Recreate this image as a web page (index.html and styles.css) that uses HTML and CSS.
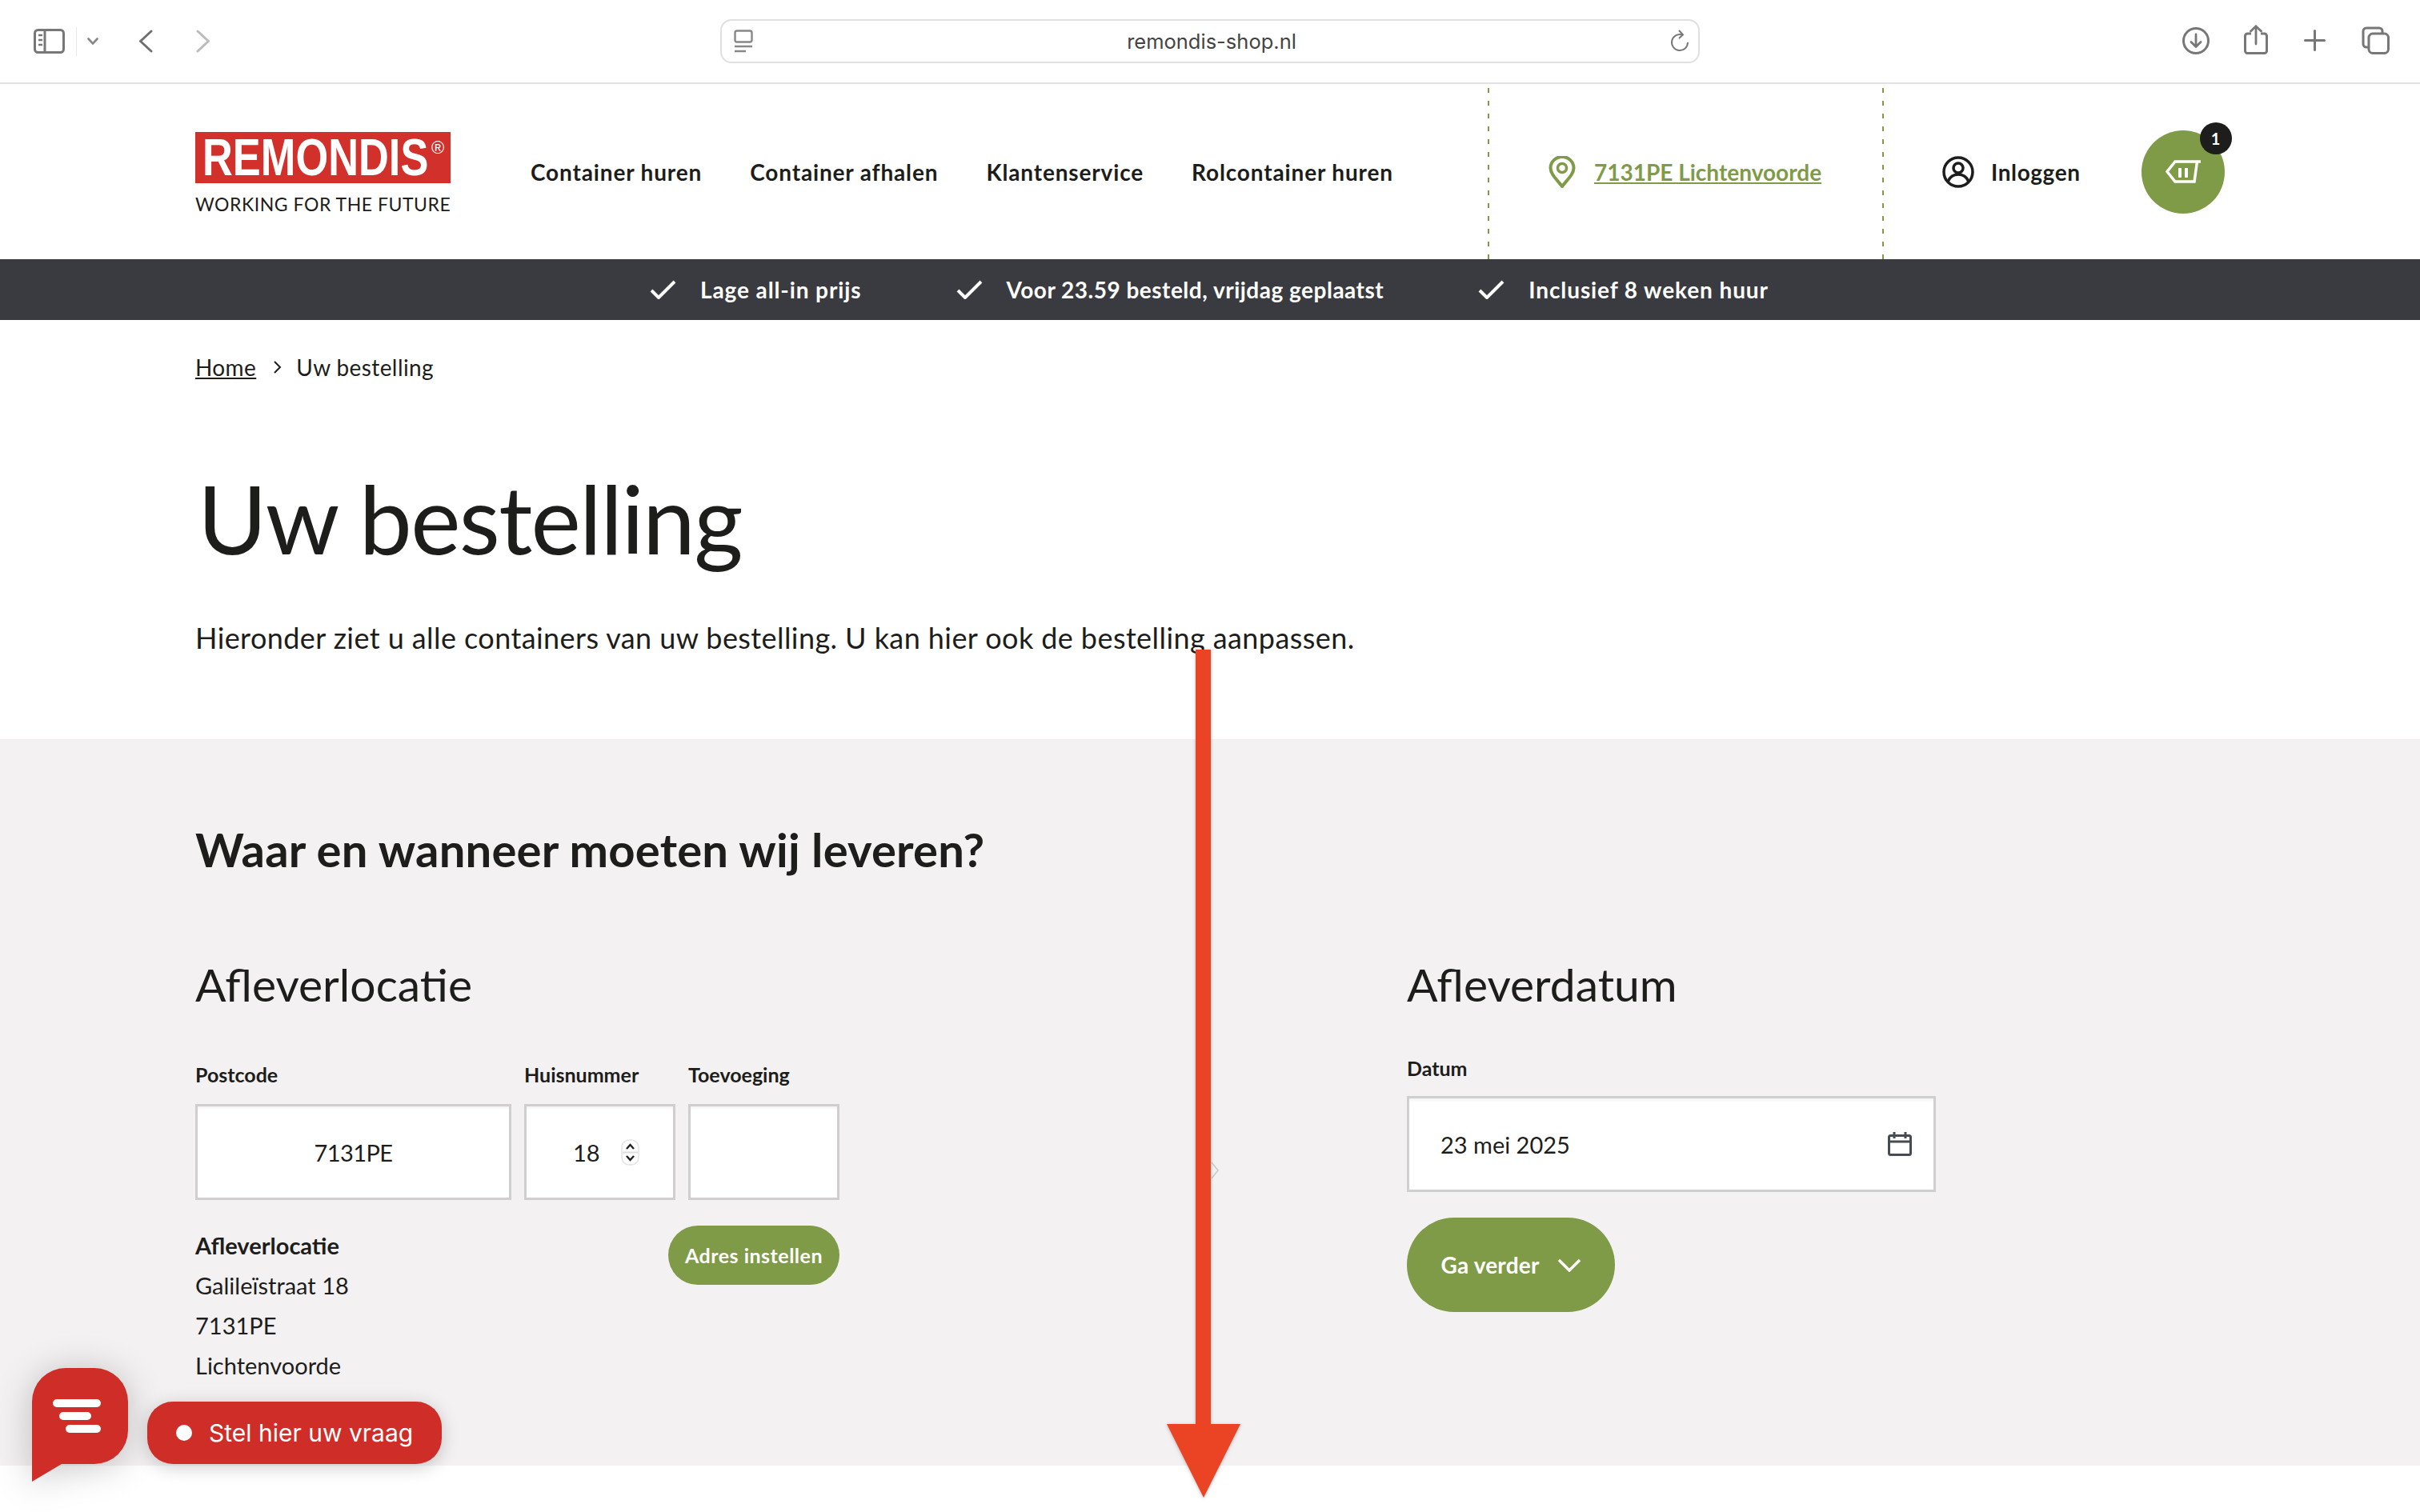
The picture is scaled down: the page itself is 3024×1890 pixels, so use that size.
FILE: index.html
```html
<!DOCTYPE html>
<html lang="nl">
<head>
<meta charset="utf-8">
<title>Uw bestelling</title>
<link rel="stylesheet" href="styles.css">
</head>
<body>
<div class="toolbar">
  <div class="tb-left">
    <svg class="i-sidebar" width="39" height="31" viewBox="0 0 39 31"><rect x="1.5" y="1.5" width="36" height="28" rx="4" fill="none" stroke="#777" stroke-width="3"/><path d="M14 2v27" stroke="#777" stroke-width="3"/><path d="M6 8h5M6 14h5M6 20h5" stroke="#777" stroke-width="2.4"/></svg>
    <span class="tb-sep"></span>
    <svg class="i-chev" width="14" height="9" viewBox="0 0 14 9"><path d="M1.5 1.5 7 7.5l5.5-6" fill="none" stroke="#888" stroke-width="2.6" stroke-linecap="round"/></svg>
    <svg class="i-back" width="18" height="29" viewBox="0 0 18 29"><path d="M16 2 2.5 14.5 16 27" fill="none" stroke="#707070" stroke-width="3" stroke-linecap="round" stroke-linejoin="round"/></svg>
    <svg class="i-fwd" width="18" height="29" viewBox="0 0 18 29"><path d="M2 2l13.5 12.5L2 27" fill="none" stroke="#bcbcbc" stroke-width="3" stroke-linecap="round" stroke-linejoin="round"/></svg>
  </div>
  <div class="urlbar">
    <svg class="i-site" width="24" height="30" viewBox="0 0 24 30"><rect x="1.5" y="1.5" width="21" height="14" rx="2.5" fill="none" stroke="#888" stroke-width="2.4"/><path d="M1 21h22M1 27h14" stroke="#888" stroke-width="2.4"/></svg>
    <span class="url-text">remondis-shop.nl</span>
    <svg class="i-reload" width="24" height="29" viewBox="0 0 24 29"><path d="M15 6.5A10 10 0 1 0 22 16" fill="none" stroke="#777" stroke-width="2"/><path d="M11 1l5 5.5-5 4.5" fill="none" stroke="#777" stroke-width="2"/></svg>
  </div>
  <div class="tb-right">
    <svg width="34" height="34" viewBox="0 0 34 34"><circle cx="17" cy="17" r="15.5" fill="none" stroke="#777" stroke-width="3"/><path d="M17 9v15M11 18.5l6 6 6-6" fill="none" stroke="#777" stroke-width="2.8" stroke-linecap="round" stroke-linejoin="round"/></svg>
    <svg class="i-share" width="30" height="37" viewBox="0 0 30 37"><path d="M9 11H4.500A3 3 0 0 0 1.500 14v18.500a3 3 0 0 0 3 3h21a3 3 0 0 0 3-3V14a3 3 0 0 0-3-3H21" fill="none" stroke="#777" stroke-width="3"/><path d="M15 24V2M8.500 8 15 1.800 21.500 8" fill="none" stroke="#777" stroke-width="2.800" stroke-linecap="round"/></svg>
    <svg class="i-plus" width="27" height="27" viewBox="0 0 27 27"><path d="M13.500 1.500v24M1.500 13.500h24" stroke="#777" stroke-width="3" stroke-linecap="round"/></svg>
    <svg class="i-tabs" width="35" height="35" viewBox="0 0 35 35"><path d="M8 26H6a4 4 0 0 1-4-4V6a4 4 0 0 1 4-4h16a4 4 0 0 1 4 4v2" fill="none" stroke="#777" stroke-width="3"/><rect x="9" y="9" width="24.500" height="24.500" rx="5" fill="none" stroke="#777" stroke-width="3"/></svg>
  </div>
</div>

<header class="site-header">
  <a class="logo">
    <span class="logo-box"><span class="logo-word">REMONDIS</span><span class="logo-reg">®</span></span>
    <span class="logo-tag">WORKING FOR THE FUTURE</span>
  </a>
  <nav class="main-nav">
    <a>Container huren</a>
    <a>Container afhalen</a>
    <a>Klantenservice</a>
    <a>Rolcontainer huren</a>
  </nav>
  <div class="location">
    <svg width="34" height="40" viewBox="0 0 34 40"><path d="M17 38C9 28 2.500 22 2.500 15a14.500 14 0 0 1 29 0c0 7-6.500 13-14.500 23z" fill="none" stroke="#7f9b47" stroke-width="4" stroke-linejoin="round"/><circle cx="17" cy="15" r="5.500" fill="none" stroke="#7f9b47" stroke-width="3.500"/></svg>
    <a class="loc-link">7131PE Lichtenvoorde</a>
  </div>
  <div class="account">
    <svg width="40" height="40" viewBox="0 0 40 40"><circle cx="20" cy="20" r="18" fill="none" stroke="#1d1d1b" stroke-width="3.500"/><circle cx="20" cy="15" r="6" fill="none" stroke="#1d1d1b" stroke-width="3.500"/><path d="M7 32c3-7 8-9 13-9s10 2 13 9" fill="none" stroke="#1d1d1b" stroke-width="3.500"/></svg>
    <span>Inloggen</span>
  </div>
  <div class="cart">
    <svg width="45" height="30" viewBox="0 0 45 30"><path d="M45 2H13L3 14.500 13 27h24l3.500-25" fill="none" stroke="#fff" stroke-width="3.500"/><path d="M19 10v12M27 10v12" stroke="#fff" stroke-width="4"/></svg>
    <span class="badge">1</span>
  </div>
</header>

<div class="usp-bar">
  <div class="usp usp-1"><svg width="33" height="24" viewBox="0 0 33 24"><path d="M2 13l9 9L31 2" fill="none" stroke="#fff" stroke-width="4"/></svg><span>Lage all-in prijs</span></div>
  <div class="usp usp-2"><svg width="33" height="24" viewBox="0 0 33 24"><path d="M2 13l9 9L31 2" fill="none" stroke="#fff" stroke-width="4"/></svg><span>Voor 23.59 besteld, vrijdag geplaatst</span></div>
  <div class="usp usp-3"><svg width="33" height="24" viewBox="0 0 33 24"><path d="M2 13l9 9L31 2" fill="none" stroke="#fff" stroke-width="4"/></svg><span>Inclusief 8 weken huur</span></div>
</div>

<main>
  <div class="intro">
    <div class="crumbs"><a>Home</a><svg width="11" height="18" viewBox="0 0 11 18"><path d="M2 2l7 7-7 7" fill="none" stroke="#1d1d1b" stroke-width="2"/></svg><span>Uw bestelling</span></div>
    <h1>Uw bestelling</h1>
    <p>Hieronder ziet u alle containers van uw bestelling. U kan hier ook de bestelling aanpassen.</p>
  </div>
  <section class="delivery">
    <h2>Waar en wanneer moeten wij leveren?</h2>
    <div class="cols">
      <div class="col-left">
        <h3>Afleverlocatie</h3>
        <div class="fields">
          <label>Postcode</label><label>Huisnummer</label><label>Toevoeging</label>
          <div class="field center">7131PE</div>
          <div class="field number"><span>18</span><span class="spin"><svg width="23" height="33" viewBox="0 0 23 33"><rect x="1" y="1" width="21" height="31" rx="9" fill="#fff" stroke="#e4e4e4" stroke-width="1.500"/><path d="M2 16.500h19" stroke="#ddd" stroke-width="2"/><path d="M7 12l4.500-5 4.500 5M7 21l4.500 5 4.500-5" fill="none" stroke="#222" stroke-width="2.400"/></svg></span></div>
          <div class="field"></div>
        </div>
        <div class="addr-row">
          <div class="address">
            <strong>Afleverlocatie</strong>
            <div>Galileïstraat 18</div>
            <div>7131PE</div>
            <div>Lichtenvoorde</div>
          </div>
          <button class="btn-small">Adres instellen</button>
        </div>
      </div>
      <div class="col-right">
        <h3>Afleverdatum</h3>
        <label class="date-label">Datum</label>
        <div class="field date"><span>23 mei 2025</span><svg width="30" height="30" viewBox="0 0 30 30"><rect x="1.500" y="4.500" width="27" height="24" rx="2" fill="none" stroke="#464c52" stroke-width="3"/><path d="M1.500 12h27M8 0v8M22 0v8" stroke="#464c52" stroke-width="3"/></svg></div>
        <button class="btn-next">Ga verder<svg width="30" height="17" viewBox="0 0 30 17"><path d="M2 2l13 13L28 2" fill="none" stroke="#fff" stroke-width="3.500"/></svg></button>
      </div>
    </div>
  </section>
</main>

<svg class="hint-chevron" width="11" height="22" viewBox="0 0 11 22"><path d="M1 1l8 10-8 10" fill="none" stroke="#c8c8c8" stroke-width="1.500"/></svg>
<svg class="arrow" width="94" height="1062" viewBox="0 0 94 1062"><path d="M36 0h19v968h37l-46 92-46-92h36z" fill="#ea4425"/></svg>

<div class="chat">
  <svg class="chat-bubble" width="120" height="142" viewBox="0 0 120 142"><path d="M42 0h36a42 42 0 0 1 42 42v36a42 42 0 0 1-42 42H37L0 142V42A42 42 0 0 1 42 0z" fill="#cf2e28"/><rect x="26" y="39" width="60" height="10" rx="5" fill="#fff"/><rect x="34" y="55" width="40" height="10" rx="5" fill="#fff"/><rect x="42" y="71" width="44" height="10" rx="5" fill="#fff"/></svg>
  <div class="chat-pill"><span class="dot"></span><span>Stel hier uw vraag</span></div>
</div>
</body>
</html>
```
FILE: styles.css
```css
* { box-sizing: border-box; }
html, body { margin: 0; padding: 0; }
body {
  width: 3024px;
  height: 1890px;
  overflow: hidden;
  position: relative;
  background: #fff;
  color: #1d1d1b;
  font-family: Lato, "Noto Sans", sans-serif;
}
svg { display: block; flex: none; }

/* browser toolbar */
.toolbar {
  height: 105px;
  border-bottom: 2px solid #e2e2e2;
  display: grid;
  grid-template-columns: 900px 1224px 1fr;
  align-items: center;
}
.tb-left { display: flex; align-items: center; padding-left: 42px; }
.tb-sep { width: 1px; height: 36px; background: #e8e8e8; margin-left: 14px; }
.i-chev { margin-left: 13px; }
.i-back { margin-left: 50px; }
.i-fwd { margin-left: 54px; }
.urlbar {
  height: 55px;
  border: 2px solid #e0e0e0;
  border-radius: 14px;
  display: flex;
  align-items: center;
  justify-content: space-between;
  padding: 0 11px 0 15px;
  font-family: Inter, "Liberation Sans", sans-serif;
  font-size: 25.5px;
  color: #444;
}
.tb-right { display: flex; align-items: center; padding-left: 603px; margin-top: -2px; }
.i-share { margin-left: 43px; margin-top: -2px; }
.i-plus { margin-left: 45px; }
.i-tabs { margin-left: 45px; }

/* site header */
.site-header {
  height: 219px;
  display: flex;
  align-items: center;
  padding-left: 244px;
  font-size: 28px;
  font-weight: 700;
}
.logo { width: 319px; display: block; margin-top: 2px; }
.logo-box {
  height: 64px;
  background: #d1302b;
  color: #fff;
  display: flex;
  align-items: center;
  padding-left: 9px;
  font-family: "Liberation Sans", sans-serif;
}
.logo-word {
  display: block;
  flex: none;
  width: 283px;
  font-size: 65px;
  line-height: 64px;
  font-weight: 700;
  white-space: nowrap;
  transform: scaleX(.806);
  transform-origin: left center;
}
.logo-reg { font-size: 22px; font-weight: 400; margin: -24px 0 0 3px; }
.logo-tag {
  display: block;
  margin-top: 14px;
  font-family: Lato, sans-serif;
  font-weight: 400;
  font-size: 23px;
  line-height: 24px;
  letter-spacing: .53px;
  white-space: nowrap;
  color: #1d1d1b;
}
.main-nav { width: 1196px; margin-left: 100px; display: flex; gap: 60px; letter-spacing: .85px; }
.location {
  width: 495px;
  align-self: stretch;
  margin-top: 5px;
  display: flex;
  align-items: center;
  gap: 23px;
  padding: 0 0 5px 76px;
  background-image:
    repeating-linear-gradient(to bottom, #7f9b47 0 6px, transparent 6px 16px),
    repeating-linear-gradient(to bottom, #7f9b47 0 6px, transparent 6px 16px);
  background-size: 2px 100%, 2px 100%;
  background-position: left top, right top;
  background-repeat: no-repeat;
}
.loc-link { color: #7f9b47; text-decoration: underline; }
.account { display: flex; align-items: center; gap: 21px; margin-left: 73px; letter-spacing: .6px; }
.cart {
  position: relative;
  width: 104px;
  height: 104px;
  margin-left: 76px;
  border-radius: 50%;
  background: #7f9b47;
  display: flex;
  align-items: center;
  justify-content: center;
}
.badge {
  position: absolute;
  top: -10px;
  right: -9px;
  width: 40px;
  height: 40px;
  border-radius: 50%;
  background: #1d1d1b;
  color: #fff;
  font-size: 20px;
  line-height: 40px;
  text-align: center;
}

/* usp bar */
.usp-bar {
  height: 76px;
  background: #3a3b40;
  color: #fff;
  display: flex;
  align-items: center;
  padding-left: 812px;
  font-size: 28px;
  font-weight: 700;
}
.usp { display: flex; align-items: center; gap: 30px; letter-spacing: .9px; }
.usp-2 { margin-left: 118px; letter-spacing: .5px; }
.usp-3 { margin-left: 118px; }

/* intro */
.intro { height: 524px; padding: 0 244px; }
.crumbs {
  height: 118px;
  display: flex;
  align-items: center;
  font-size: 28px;
  letter-spacing: .4px;
}
.crumbs a { text-decoration: underline; }
.crumbs svg { margin: 0 18px 0 21px; }
h1 {
  margin: 60px 0 0 3px;
  font-size: 118px;
  line-height: 140px;
  font-weight: 400;
  letter-spacing: -1.7px;
}
.intro p {
  margin: 54px 0 0;
  font-size: 36px;
  line-height: 50px;
  letter-spacing: .42px;
}

/* delivery */
.delivery {
  height: 908px;
  background: #f3f1f2;
  padding: 103px 0 0 244px;
}
h2 {
  margin: 0;
  font-size: 58px;
  line-height: 70px;
  font-weight: 700;
  letter-spacing: .17px;
}
.cols { display: grid; grid-template-columns: 1514px 661px; margin-top: 93px; }
h3 {
  margin: 0;
  font-size: 57px;
  line-height: 80px;
  font-weight: 400;
}
.fields {
  width: 805px;
  display: grid;
  grid-template-columns: 395px 189px 189px;
  column-gap: 16px;
  margin-top: 58px;
}
label {
  display: block;
  font-size: 25px;
  line-height: 30px;
  font-weight: 700;
  margin-bottom: 22px;
}
.field {
  height: 120px;
  background: #fff;
  border: 3px solid #cfcfcf;
  box-shadow: inset 0 4px 4px -2px rgba(0, 0, 0, .06);
  font-size: 29px;
  display: flex;
  align-items: center;
}
.center { justify-content: center; letter-spacing: -.6px; }
.number { padding-left: 58px; gap: 26px; }
.addr-row {
  width: 805px;
  display: flex;
  justify-content: space-between;
  align-items: flex-start;
  margin-top: 32px;
}
.address { font-size: 29px; line-height: 50px; }
.address strong { display: block; font-weight: 700; }
.btn-small {
  width: 214px;
  height: 74px;
  border: 0;
  border-radius: 37px;
  background: #7f9b47;
  color: #fff;
  font-family: inherit;
  font-size: 25px;
  font-weight: 700;
  letter-spacing: .5px;
  padding: 0;
}
.date-label { margin: 53px 0 22px; line-height: 25px; }
.date { padding: 0 27px 0 39px; justify-content: space-between; }
.btn-next {
  margin-top: 32px;
  width: 260px;
  height: 118px;
  border: 0;
  border-radius: 59px;
  background: #7f9b47;
  color: #fff;
  font-family: inherit;
  font-size: 28px;
  font-weight: 700;
  letter-spacing: .2px;
  display: flex;
  align-items: center;
  justify-content: center;
  gap: 22px;
  padding: 0;
}

/* overlays */
.hint-chevron { position: absolute; left: 1513px; top: 1452px; }
.arrow { position: absolute; left: 1458px; top: 812px; filter: drop-shadow(0 1px 2px rgba(0,0,0,.25)); }
.chat { position: absolute; left: 40px; top: 1710px; display: flex; align-items: flex-end; gap: 24px; }
.chat-bubble { filter: drop-shadow(0 4px 22px rgba(0,0,0,.22)); align-self: flex-start; }
.chat-pill {
  position: absolute;
  left: 144px;
  top: 42px;
  width: 368px;
  height: 78px;
  border-radius: 32px;
  background: #cf2e28;
  color: #fff;
  box-shadow: 0 4px 22px rgba(0,0,0,.2);
  display: flex;
  align-items: center;
  gap: 21px;
  padding-left: 36px;
  font-family: Inter, sans-serif;
  font-size: 30px;
}
.dot { width: 20px; height: 20px; border-radius: 50%; background: #fff; }
```
